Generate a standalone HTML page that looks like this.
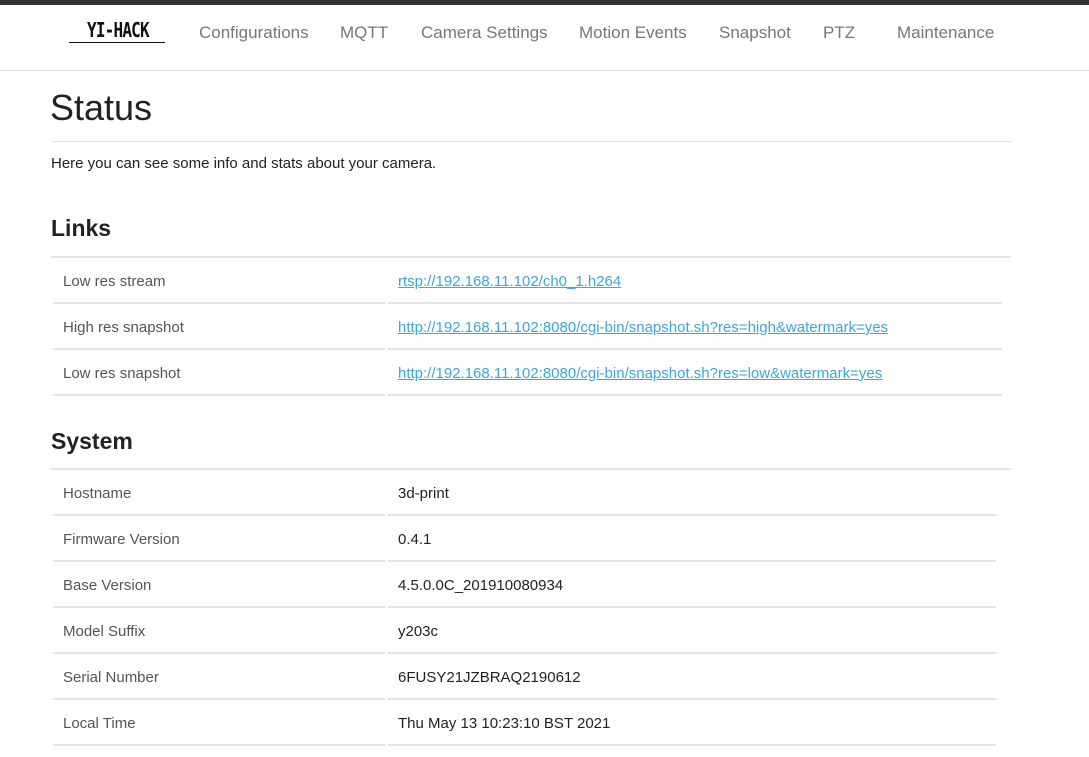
<!DOCTYPE html>
<html><head><meta charset="utf-8"><style>
*{margin:0;padding:0;box-sizing:border-box}
body{width:1089px;height:757px;overflow:hidden;background:#fff;font-family:"Liberation Sans",sans-serif;color:#222;position:relative}
.a{position:absolute;white-space:nowrap}
.bar{left:0;top:0;width:1089px;height:5px;background:#333}
.hdr{left:0;top:70px;width:1089px;height:1px;background:#e0e0e0}
.nav{top:23px;font-size:17px;color:#777}
.logo{left:87px;top:18px;font-family:"DejaVu Sans Mono","Liberation Mono",monospace;font-weight:bold;font-size:20px;letter-spacing:-1px;color:#111;transform:scaleX(0.8);transform-origin:left}
.line{height:2px;background:#e4e4e4}
.lbl{font-size:15px;color:#555;left:63px}
.val{font-size:15px;color:#222;left:398px}
.lnk{font-size:15px;color:#3aa8dc;text-decoration:underline;left:398px}
h2{position:absolute;font-size:23px;font-weight:bold;left:51px}
</style></head><body>
<div class="a bar"></div>
<div class="a logo">YI-HACK</div>
<div class="a" style="left:69px;top:42px;width:96px;height:1px;background:#111"></div>
<div class="a nav" style="left:199px">Configurations</div>
<div class="a nav" style="left:340px">MQTT</div>
<div class="a nav" style="left:421px">Camera Settings</div>
<div class="a nav" style="left:579px">Motion Events</div>
<div class="a nav" style="left:719px">Snapshot</div>
<div class="a nav" style="left:823px">PTZ</div>
<div class="a nav" style="left:897px">Maintenance</div>
<div class="a hdr"></div>
<div class="a" style="left:50px;top:87px;font-size:36px;color:#222">Status</div>
<div class="a" style="left:51px;top:141px;width:960px;height:1px;background:#e0e0e0"></div>
<div class="a" style="left:51px;top:155px;font-size:15px">Here you can see some info and stats about your camera.</div>
<h2 style="top:215px">Links</h2>
<div class="a line" style="left:51px;top:256px;width:960px"></div>
<div class="a lbl" style="top:273px">Low res stream</div>
<div class="a lnk" style="top:273px">rtsp://192.168.11.102/ch0_1.h264</div>
<div class="a line" style="left:53px;top:302px;width:332px"></div><div class="a line" style="left:388px;top:302px;width:614px"></div>
<div class="a lbl" style="top:319px">High res snapshot</div>
<div class="a lnk" style="top:319px">http://192.168.11.102:8080/cgi-bin/snapshot.sh?res=high&amp;watermark=yes</div>
<div class="a line" style="left:53px;top:348px;width:332px"></div><div class="a line" style="left:388px;top:348px;width:614px"></div>
<div class="a lbl" style="top:365px">Low res snapshot</div>
<div class="a lnk" style="top:365px">http://192.168.11.102:8080/cgi-bin/snapshot.sh?res=low&amp;watermark=yes</div>
<div class="a line" style="left:53px;top:394px;width:332px"></div><div class="a line" style="left:388px;top:394px;width:614px"></div>
<h2 style="top:428px">System</h2>
<div class="a line" style="left:51px;top:468px;width:960px"></div>
<div class="a lbl" style="top:485px">Hostname</div><div class="a val" style="top:485px">3d-print</div>
<div class="a line" style="left:53px;top:514px;width:332px"></div><div class="a line" style="left:388px;top:514px;width:608px"></div>
<div class="a lbl" style="top:531px">Firmware Version</div><div class="a val" style="top:531px">0.4.1</div>
<div class="a line" style="left:53px;top:560px;width:332px"></div><div class="a line" style="left:388px;top:560px;width:608px"></div>
<div class="a lbl" style="top:577px">Base Version</div><div class="a val" style="top:577px">4.5.0.0C_201910080934</div>
<div class="a line" style="left:53px;top:606px;width:332px"></div><div class="a line" style="left:388px;top:606px;width:608px"></div>
<div class="a lbl" style="top:623px">Model Suffix</div><div class="a val" style="top:623px">y203c</div>
<div class="a line" style="left:53px;top:652px;width:332px"></div><div class="a line" style="left:388px;top:652px;width:608px"></div>
<div class="a lbl" style="top:669px">Serial Number</div><div class="a val" style="top:669px">6FUSY21JZBRAQ2190612</div>
<div class="a line" style="left:53px;top:698px;width:332px"></div><div class="a line" style="left:388px;top:698px;width:608px"></div>
<div class="a lbl" style="top:715px">Local Time</div><div class="a val" style="top:715px">Thu May 13 10:23:10 BST 2021</div>
<div class="a line" style="left:53px;top:744px;width:332px"></div><div class="a line" style="left:388px;top:744px;width:608px"></div>
</body></html>
